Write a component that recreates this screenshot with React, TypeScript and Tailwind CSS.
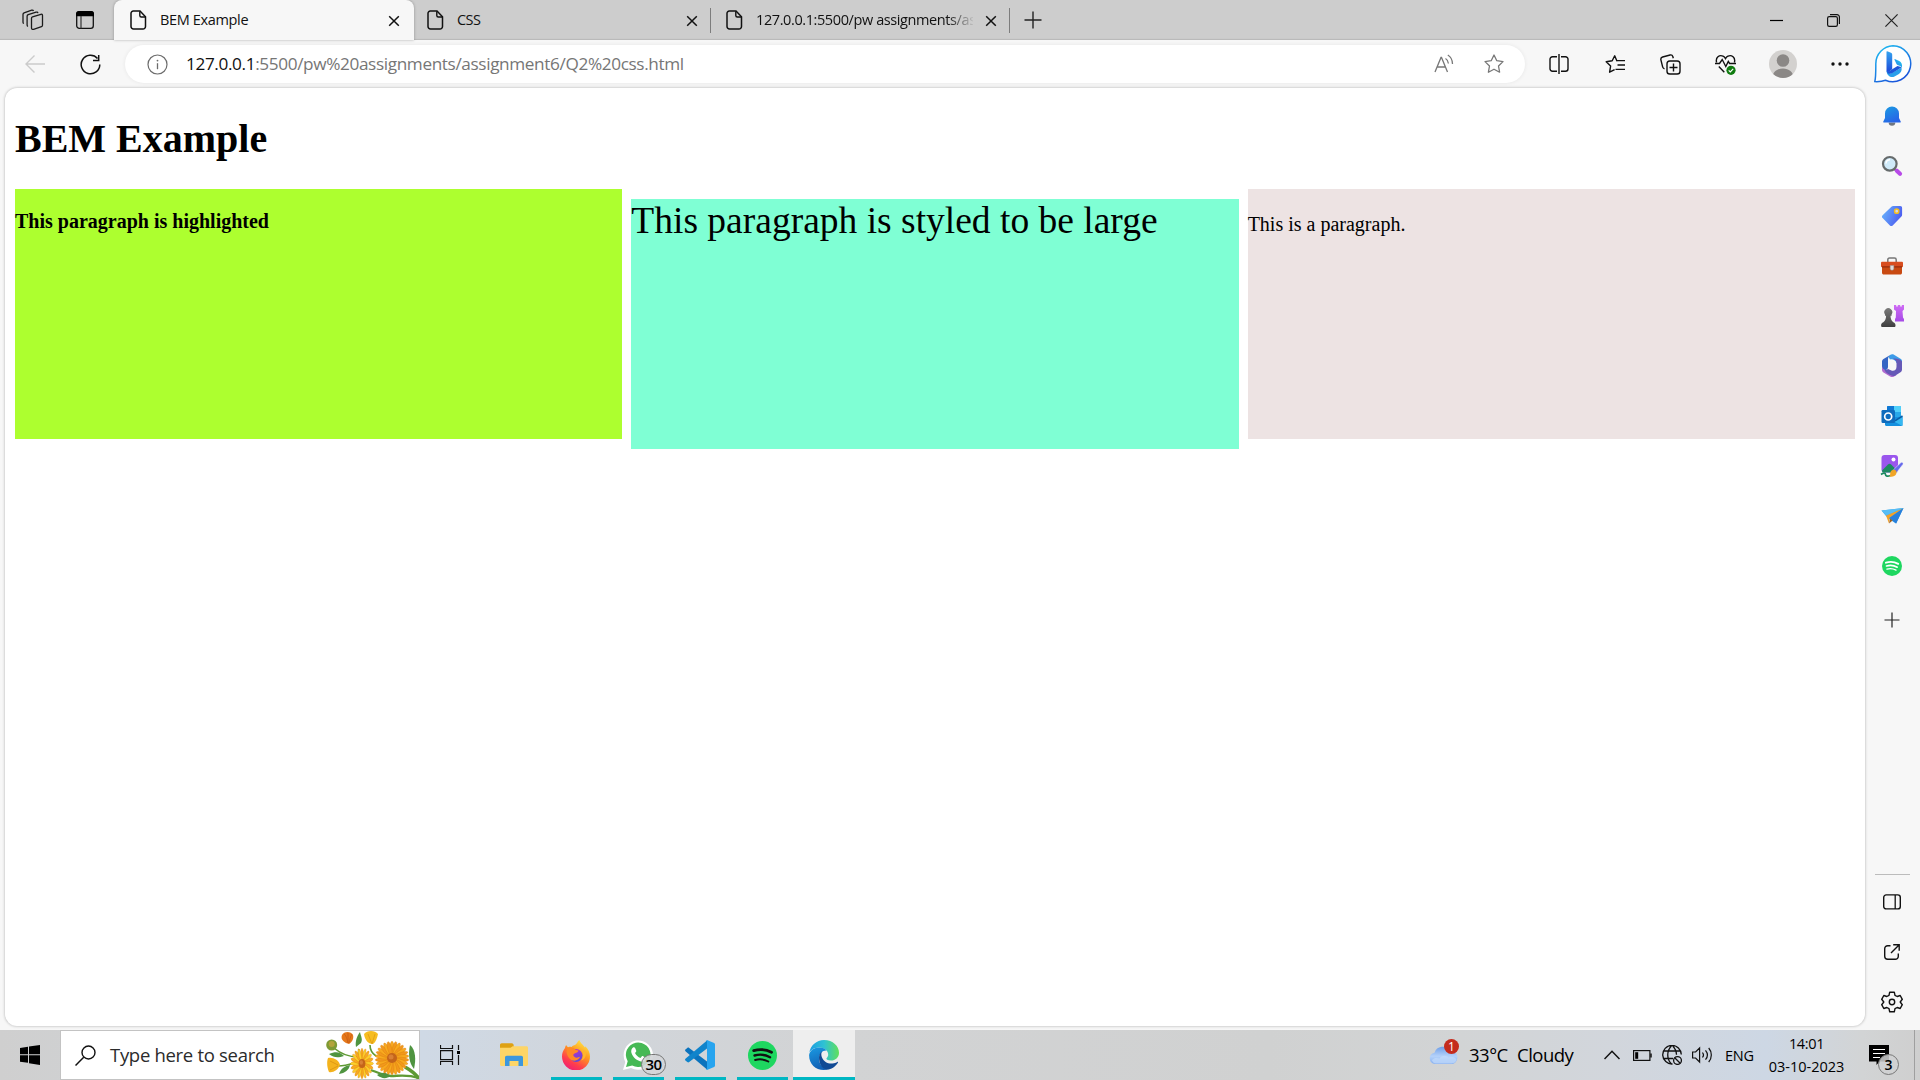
import type { ReactNode } from "react";

const UI = "font-['Open_Sans','Noto_Sans',sans-serif]";
const SERIF = "font-['Liberation_Serif',serif]";

type SvgProps = { w: number; h: number; children: ReactNode; className?: string };

function Svg({ w, h, children, className = "" }: SvgProps) {
  return (
    <svg width={w} height={h} viewBox={`0 0 ${w} ${h}`} fill="none" className={`block shrink-0 ${className}`}>
      {children}
    </svg>
  );
}

function Cell({ className, children }: { className: string; children?: ReactNode }) {
  return <div className={`flex shrink-0 items-center justify-center ${className}`}>{children}</div>;
}

/* ---------- tab strip ---------- */

function FileIcon() {
  return (
    <Svg w={17} h={20}>
      <path d="M3.3 1H10l5.5 5.7v9.8A2.5 2.5 0 0 1 13 19H3.5A2.5 2.5 0 0 1 1 16.500V3.300A2.300 2.300 0 0 1 3.300 1Z" stroke="#111" strokeWidth="1.500" />
      <path d="M9.800 1.300V5.500a1.500 1.500 0 0 0 1.500 1.500h4" stroke="#111" strokeWidth="1.400" />
    </Svg>
  );
}

function CloseX() {
  return (
    <Svg w={12} h={12}>
      <path d="M1.200 1.200 10.800 10.800M10.800 1.200 1.200 10.800" stroke="#111" strokeWidth="1.500" />
    </Svg>
  );
}

function Tab({ title, active, faded, tracking }: { title: string; active?: boolean; faded?: boolean; tracking: string }) {
  return (
    <div
      className={
        active
          ? "z-10 -mr-[2px] flex h-10 w-[300px] shrink-0 items-center rounded-t-lg bg-[#f7f7f7] pl-4 shadow-[0_0_3px_rgba(0,0,0,0.3)]"
          : "flex h-10 w-[299px] shrink-0 items-center pl-[15px]"
      }
    >
      <FileIcon />
      <div
        className={`ml-[13px] w-[218px] overflow-hidden text-[14.5px] leading-5 whitespace-nowrap text-[#111] ${tracking} ${
          faded ? "[mask-image:linear-gradient(to_right,#000_88%,transparent_101%)]" : ""
        }`}
      >
        {title}
      </div>
      <div className={active ? "ml-[10px] pt-px" : "ml-[12px] pt-px"}>
        <CloseX />
      </div>
      {!active && <div className="ml-[12px] h-[25px] w-px bg-[#7d7d7d]" />}
    </div>
  );
}

function TitleBar() {
  return (
    <div className="flex h-10 shrink-0 bg-[#cdcdcd] shadow-[inset_0_-2px_1px_-1px_#b9b9b9]">
      <div className="flex w-[114px] shrink-0 items-center pl-[22px]">
        <Svg w={22} h={22}>
          <g stroke="#1c1c1c" strokeWidth="1.300" strokeLinejoin="round">
            <path d="M9.500 9.300c0-.7.400-1.200 1-1.400l8.400-2.600c.9-.3 1.600.2 1.600 1.100v9.800c0 .7-.4 1.200-1 1.400l-7.900 2.700c-1.200.4-2.100-.2-2.100-1.300V9.300Z" />
            <path d="M6 17.500c-.6-.2-.9-.7-.9-1.400V7.300c0-.8.400-1.300 1.100-1.600l7.900-2.500c.9-.3 1.600 0 1.800.9" />
            <path d="M1.900 14.500c-.6-.2-.9-.7-.9-1.300V5.400c0-.8.400-1.300 1.100-1.600L9.700 1.200c.8-.2 1.500 0 1.800.8" />
          </g>
        </Svg>
        <Svg w={18} h={18} className="ml-8">
          <rect x="0.700" y="0.700" width="16.600" height="16.600" rx="2.600" stroke="#111" strokeWidth="1.300" />
          <path d="M0 5.300V3a3 3 0 0 1 3-3h12a3 3 0 0 1 3 3v2.300Z" fill="#000" />
          <path d="M5 5v12.500" stroke="#333" strokeWidth="1.200" />
        </Svg>
      </div>
      <Tab title="BEM Example" active tracking="tracking-[-0.35px]" />
      <Tab title="CSS" tracking="tracking-[-0.6px]" />
      <Tab title="127.0.0.1:5500/pw assignments/assignment6" faded tracking="tracking-[-0.4px]" />
      <Cell className="-ml-px w-12">
        <Svg w={18} h={18}>
          <path d="M9 .500v17M.500 9h17" stroke="#222" strokeWidth="1.400" />
        </Svg>
      </Cell>
      <div className="flex-1" />
      <Cell className="w-[57px]">
        <Svg w={13} h={13}>
          <path d="M0 6.500h13" stroke="#000" strokeWidth="1.200" />
        </Svg>
      </Cell>
      <Cell className="w-[57px]">
        <Svg w={13} h={13}>
          <rect x="0.600" y="2.600" width="9.800" height="9.800" rx="1.600" stroke="#111" strokeWidth="1.200" />
          <path d="M3 .600h7a2.400 2.400 0 0 1 2.400 2.400v7" stroke="#111" strokeWidth="1.200" />
        </Svg>
      </Cell>
      <Cell className="w-[58px]">
        <Svg w={13} h={13}>
          <path d="m.400.400 12.200 12.200M12.600.400.400 12.600" stroke="#222" strokeWidth="1.200" />
        </Svg>
      </Cell>
    </div>
  );
}

/* ---------- toolbar ---------- */

function BingLogo() {
  return (
    <Svg w={40} h={40}>
      <defs>
        <linearGradient id="bingRing" x1="0" y1="0" x2="0.600" y2="1">
          <stop offset="0" stopColor="#1fc3f2" />
          <stop offset="1" stopColor="#1a56db" />
        </linearGradient>
        <linearGradient id="bingStem" x1="0" y1="0" x2="0" y2="1">
          <stop offset="0" stopColor="#35a5f0" />
          <stop offset="1" stopColor="#1c46d8" />
        </linearGradient>
        <linearGradient id="bingBowl" x1="1" y1="0" x2="0" y2="1">
          <stop offset="0" stopColor="#22d6ee" />
          <stop offset="1" stopColor="#2b74ea" />
        </linearGradient>
      </defs>
      <path d="M20 1.700a18 18 0 1 1-7.500 34.500c-2.500 1-6.200 1.600-10.700 1.400 1.100-4.500 1-8 1-17.900A18 18 0 0 1 20 1.700Z" fill="#fff" stroke="url(#bingRing)" strokeWidth="1.500" />
      <path d="m14.200 7.200 3.800 1.500c.8.400 1.200 1 1.200 1.800v14.700l-4.700 3.600c-.8-.5-1-1.200-1-2.200V7.800c0-.5.300-.8.700-.6Z" fill="url(#bingStem)" />
      <path d="M13.700 26.300c.5 2.500 3 4 5.300 2.800l9.500-5.500c.7 3-.7 5.500-3 6.700l-4 2.200c-3.400 1.700-7.500-.8-7.800-4.800v-1.400Z" fill="#299fea" />
      <path d="m14 28.500 10.500-6.500 4.300 1.200-9.300 5.800c-2 1.200-4.200 1-5.500-.5Z" fill="#1d55d8" />
      <path d="m21.800 15 4.400 2c2.300 1 3.200 3.300 2.800 6.500-.6-.8-1.500-1.300-2.500-1.700l-2-.8c-.5-.2-.8-.4-1-.9l-2-4.300c-.2-.5 0-.8.300-.8Z" fill="url(#bingBowl)" />
    </Svg>
  );
}

function Toolbar() {
  return (
    <div className="flex h-12 shrink-0 items-center bg-[#f7f7f7]">
      <Cell className="w-[70px]">
        <Svg w={20} h={18}>
          <path d="M20 9H1M9.500.500 1 9l8.500 8.500" stroke="#cbcbcb" strokeWidth="1.400" />
        </Svg>
      </Cell>
      <Cell className="w-10">
        <Svg w={21} h={21}>
          <path d="M19.800 10.500A9.300 9.300 0 1 1 17.500 4.400M18.700 1v5.500h-5.700" stroke="#111" strokeWidth="1.500" />
        </Svg>
      </Cell>
      <div className="ml-[15px] flex h-[38px] w-[1400px] shrink-0 items-center rounded-full bg-white shadow-[0_0_4px_rgba(0,0,0,0.07)]">
        <Cell className="w-[65px]">
          <Svg w={21} h={21}>
            <circle cx="10.500" cy="10.500" r="9.500" stroke="#6c6c6c" strokeWidth="1.200" />
            <path d="M10.500 9.200v6" stroke="#6c6c6c" strokeWidth="1.300" />
            <circle cx="10.500" cy="6.600" r="0.900" fill="#6c6c6c" />
          </Svg>
        </Cell>
        <div className="-ml-[4px] text-[17.2px] leading-6 tracking-[-0.37px] whitespace-nowrap text-[#767676]">
          <span className="text-[#111]">127.0.0.1</span>:5500/pw%20assignments/assignment6/Q2%20css.html
        </div>
        <div className="flex-1" />
        <Cell className="w-[50px]">
          <Svg w={20} h={20}>
            <path d="m1 18 6-14.500h.500L13.500 18M3.200 13h8" stroke="#777" strokeWidth="1.300" />
            <path d="M11.500 4.500c1.700 1 2.700 2.800 2.900 5M13.800 1c2.900 1.700 4.600 5 4.700 9" stroke="#777" strokeWidth="1.300" />
          </Svg>
        </Cell>
        <Cell className="w-[50px]">
          <Svg w={20} h={20}>
            <path d="m10 1 2.800 5.700 6.200.9-4.500 4.400 1.100 6.200-5.600-3-5.600 3 1.100-6.200L1 7.600l6.200-.9Z" stroke="#777" strokeWidth="1.300" strokeLinejoin="round" />
          </Svg>
        </Cell>
        <div className="w-[6px]" />
      </div>
      <Cell className="ml-[6px] w-[56px]">
        <Svg w={20} h={20}>
          <path d="M8 2.700H3.500A2.500 2.500 0 0 0 1 5.200v9.600a2.500 2.500 0 0 0 2.500 2.500H8M12 2.700h4.500A2.500 2.500 0 0 1 19 5.200v9.600a2.500 2.500 0 0 1-2.500 2.500H12M10 0v20" stroke="#111" strokeWidth="1.400" />
        </Svg>
      </Cell>
      <Cell className="w-[55px]">
        <Svg w={20} h={20}>
          <path d="m12.300 6.600-.6-.1L9.700 1.800 7.200 6.700l-6 1 4.400 4.400-1 6.100 5-2.500" stroke="#111" strokeWidth="1.400" strokeLinejoin="round" />
          <path d="M11.300 6.600H20M12.500 11H20M10.500 15.400H20" stroke="#111" strokeWidth="1.400" />
        </Svg>
      </Cell>
      <Cell className="w-[56px]">
        <Svg w={21} h={21}>
          <rect x="7" y="7" width="13" height="13" rx="2.800" stroke="#111" strokeWidth="1.400" />
          <path d="M13.500 9.500v8M9.500 13.500h8" stroke="#111" strokeWidth="1.400" />
          <path d="M4.500 14.800c-1-.3-1.500-.8-1.800-1.700L.900 5.800c-.3-1.500.3-2.400 1.700-2.800l7.500-2c1.400-.3 2.300.2 2.700 1.500l.5 1.800" stroke="#111" strokeWidth="1.400" />
        </Svg>
      </Cell>
      <Cell className="w-[54px]">
        <Svg w={21} h={21}>
          <path d="M1.600 8.500C.200 3.500 4.500.500 8 2.200c1.200.6 1.900 1.400 2.500 2.400.6-1 1.300-1.800 2.500-2.400 3.500-1.700 7.800 1.300 6.400 6.300M3.800 12.500l5.500 5.800" stroke="#111" strokeWidth="1.400" />
          <path d="M0 9.500h4.500l2.700-4 3.600 7 2.500-5 1.300 2H21" stroke="#111" strokeWidth="1.400" />
          <circle cx="16" cy="16.300" r="4.600" fill="#107c10" />
          <path d="m13.700 16.400 1.600 1.500 2.900-3" stroke="#fff" strokeWidth="1.200" />
        </Svg>
      </Cell>
      <Cell className="w-[61px]">
        <Svg w={28} h={28}>
          <defs>
            <clipPath id="avatar">
              <circle cx="14" cy="14" r="14" />
            </clipPath>
          </defs>
          <circle cx="14" cy="14" r="14" fill="#d3d1cf" />
          <g clipPath="url(#avatar)" fill="#8b8886">
            <circle cx="14" cy="10.500" r="6.300" />
            <path d="M3.500 28c0-6 4.700-9.500 10.500-9.500S24.500 22 24.500 28Z" />
          </g>
        </Svg>
      </Cell>
      <Cell className="w-[53px]">
        <Svg w={18} h={6}>
          <circle cx="2" cy="3" r="1.700" fill="#111" />
          <circle cx="9" cy="3" r="1.700" fill="#111" />
          <circle cx="16" cy="3" r="1.700" fill="#111" />
        </Svg>
      </Cell>
      <Cell className="w-[53px]">
        <BingLogo />
      </Cell>
    </div>
  );
}

/* ---------- document ---------- */

function Document() {
  return (
    <div className={`ml-[5px] h-[938px] w-[1860px] shrink-0 rounded-xl bg-white px-[10px] text-black shadow-[0_0_3px_rgba(0,0,0,0.3)] ${SERIF}`}>
      <h1 className="pt-[28px] text-[40px] leading-[46px] font-bold">BEM Example</h1>
      <div className="mt-[27px] flex items-start gap-[9px]">
        <div className="h-[250px] flex-1 bg-[#adff2f] pt-[21px]">
          <p className="text-[20px] leading-[23px] font-bold">This paragraph is highlighted</p>
        </div>
        <div className="mt-[10px] h-[250px] flex-1 bg-[#7fffd4]">
          <p className="text-[37.500px] leading-[43px]">This paragraph is styled to be large</p>
        </div>
        <div className="h-[250px] flex-1 bg-[#ede3e3] pt-[24px]">
          <p className="text-[20px] leading-[23px]">This is a paragraph.</p>
        </div>
      </div>
    </div>
  );
}

/* ---------- sidebar ---------- */

function SpotifyMark({ size, lines }: { size: number; lines: string }) {
  return (
    <svg width={size} height={size} viewBox="0 0 28 28" fill="none" className="block">
      <circle cx="14" cy="14" r="14" fill="#1ed760" />
      <g stroke={lines} strokeLinecap="round">
        <path d="M5.500 9.300c5.500-1.600 12-1.200 17.200 1.600" strokeWidth="2.700" />
        <path d="M6.300 14c5-1.400 10.500-.8 15 1.700" strokeWidth="2.300" />
        <path d="M6.900 18.300c4.200-1.100 9-.6 12.700 1.500" strokeWidth="1.900" />
      </g>
    </svg>
  );
}

const sidebarIcons: ReactNode[] = [
  <Svg key="bell" w={20} h={20}>
    <defs>
      <linearGradient id="bell" x1="0" y1="0" x2="0.500" y2="1">
        <stop offset="0" stopColor="#1b9de2" />
        <stop offset="1" stopColor="#2764e7" />
      </linearGradient>
    </defs>
    <path d="M6.700 16.500h6.600a3.300 3.300 0 0 1-6.600 0Z" fill="#6f7680" />
    <path d="M10 .500a7 7 0 0 1 7 7V12l1.700 3.400c.3.700 0 1.200-.8 1.200H2.100c-.8 0-1.100-.5-.8-1.200L3 12V7.500a7 7 0 0 1 7-7Z" fill="url(#bell)" />
  </Svg>,
  <Svg key="search" w={22} h={22}>
    <path d="m13 14 2.500 2" stroke="#777" strokeWidth="2" />
    <path d="m15.800 15.800 3.200 3" stroke="#b84ae8" strokeWidth="4.200" strokeLinecap="round" />
    <circle cx="8.800" cy="8.800" r="6.800" fill="#cfeaf9" stroke="#666b6c" strokeWidth="2.200" />
    <path d="M5 8.500a4 4 0 0 1 4-3.700" stroke="#fff" strokeWidth="1.400" />
  </Svg>,
  <Svg key="tag" w={22} h={22}>
    <defs>
      <linearGradient id="tag" x1="0" y1="0.300" x2="1" y2="0.700">
        <stop offset="0" stopColor="#67b1fb" />
        <stop offset="1" stopColor="#4a55ef" />
      </linearGradient>
    </defs>
    <path d="M12.300 1h6.900c1.200 0 1.900.7 1.900 1.900v6.800c0 .7-.2 1.200-.7 1.700l-8.700 9c-.9.9-1.900.9-2.800 0l-7.300-7.300c-.9-.9-.9-2 0-2.900l8.800-8.500c.5-.5 1.100-.7 1.900-.7Z" fill="url(#tag)" />
    <circle cx="15.700" cy="6.200" r="2.100" fill="#d6d9e9" stroke="#f5bd1e" strokeWidth="1.500" />
  </Svg>,
  <Svg key="briefcase" w={22} h={20}>
    <path d="M6.800 6V3.700c0-1.100.6-1.700 1.700-1.700h5c1.100 0 1.700.6 1.700 1.700V6" stroke="#777" strokeWidth="1.500" />
    <rect x="0" y="5.700" width="22" height="5.500" rx="1" fill="#d84d1f" />
    <path d="M1 10.500h20v6.200c0 1-.7 1.800-1.800 1.800H2.800c-1.100 0-1.800-.8-1.800-1.800Z" fill="#c94a12" />
    <path d="M1 10.900h20" stroke="#942b0d" strokeWidth="1.200" />
    <path d="M9.200 9.500h3.600v3a1.800 1.800 0 0 1-3.600 0Z" fill="#ddd" stroke="#999" strokeWidth="0.500" />
  </Svg>,
  <Svg key="chess" w={23} h={24}>
    <defs>
      <linearGradient id="rook" x1="0" y1="0" x2="0" y2="1">
        <stop offset="0" stopColor="#cf6cf5" />
        <stop offset="1" stopColor="#a64be6" />
      </linearGradient>
      <linearGradient id="pawn" x1="0" y1="0" x2="0" y2="1">
        <stop offset="0" stopColor="#7a7a7a" />
        <stop offset="1" stopColor="#3f3f3f" />
      </linearGradient>
    </defs>
    <path d="M13 1h2.200v1.600h1.600V1h2.400v1.600h1.600V1H23v4.500l-1.500 1.500.5 6.500 1 1.500v2.500h-9V15l.8-1.500.2-6.500-2-1.500Z" fill="url(#rook)" />
    <path d="M4 10.500a4 4 0 1 1 6.600 0v1.300H9.500c.1 3 .8 5 2.800 6.500 1.500.6 2.200 1.500 2.200 3.200 0 1-.5 1.500-1.500 1.500H1.600c-1 0-1.500-.5-1.500-1.500 0-1.700.7-2.600 2.200-3.200 2-1.500 2.700-3.500 2.800-6.500H4Z" fill="url(#pawn)" />
  </Svg>,
  <Svg key="m365" w={22} h={24}>
    <path d="M13 .800 19.500 4.700c1 .6 1.500 1.500 1.500 2.700v2.800L15.500 9C14.500 6 11.500 4.800 9 5.600L7.500 2.800 9 1c1.300-.8 2.700-.9 4-.2Z" fill="#3d9be8" />
    <path d="M9.200.900C7.700 2 7 3.500 7 5.500V13c0 2-1.500 3-3 3.200-1.700.1-3-1-3-3V7.600c0-1.200.5-2.100 1.500-2.700Z" fill="#3565c4" />
    <path d="M1 12v3.700c0 1.200.5 2.100 1.500 2.700l6.600 4c1.300.8 2.700.8 4 0l2.500-1.500-8.500-5.500C5 17 1.500 15.500 1 12Z" fill="#b06bd0" />
    <path d="M21 7.500v8.100c0 1.200-.5 2.100-1.500 2.700l-5.500 3.400c-2 .5-4.500 0-7.500-2.200-1.500-1-2.300-2-3-3.500 1.500.3 2.700-.1 3.500-1l4 1.700c2.500.5 4.500-1 4.500-4V9c0-2.500-1.500-3.500-3.500-4.300 4-.5 7.500.8 9 2.800Z" fill="#6659b7" />
    <path d="m11.200 7.800 3.600 2.100v4.200l-3.600 2.100-3.600-2.100V9.900Z" fill="#f7f7f7" />
  </Svg>,
  <Svg key="outlook" w={22} h={22}>
    <rect x="6" y="1" width="14" height="12" rx="1.200" fill="#28a8ea" />
    <path d="M6 2.200C6 1.500 6.500 1 7.200 1H13v6H6Z" fill="#0f78d4" />
    <path d="M13 1h5.800c.7 0 1.200.5 1.200 1.200V7h-7Z" fill="#50d0fa" />
    <path d="M4 12h17.500v7.800c0 .7-.5 1.200-1.200 1.200H5.200c-.7 0-1.200-.5-1.200-1.200Z" fill="#1490df" />
    <path d="m21.500 11.500-8.500 5 8.500 4.500Z" fill="#35b8f1" />
    <path d="M21.500 11 14 15.800" stroke="#0a5da8" strokeWidth="1.500" />
    <rect x="0.500" y="5" width="13.500" height="13" rx="1.200" fill="#0f6cbd" />
    <circle cx="7.200" cy="11.500" r="3.500" stroke="#fff" strokeWidth="1.700" />
  </Svg>,
  <Svg key="designer" w={24} h={24}>
    <rect x="1.500" y="1" width="16.500" height="17.500" rx="3" fill="#9a56ed" />
    <path d="m2 16.500 6-6c1-1 2.100-1 3.100 0l6 6v2H3.500C2.500 18.500 2 17.800 2 16.500Z" fill="#1c8a60" />
    <circle cx="13.500" cy="5.500" r="2" fill="#fff" />
    <path d="M0 19.500h11V24H0Z" fill="#f7f7f7" />
    <path d="M1 20.500c3-2 4.500-1.500 4.500 0s2 2.300 5 1" stroke="#1c8a60" strokeWidth="1.800" />
    <path d="M21 8.500c1.300-.9 2.700.5 1.900 1.900l-6.500 8.400-3-3Z" fill="#6669ec" stroke="#f7f7f7" strokeWidth="0.500" />
    <path d="M13.600 15.800c2.500 0 3.500 2 2.600 4.200-1.200 2.600-4 3-7 2.500 1.300-1.300.7-2.300 1.200-4 .5-1.700 1.700-2.600 3.200-2.700Z" fill="#f0a527" />
  </Svg>,
  <Svg key="drop" w={23} h={20}>
    <path d="M.500 4.500 22.500 2 15 17.500 9.500 14 5 10Z" fill="#38a5ec" />
    <path d="m5 9.500 17.500-7.500-14 10L8 17.500Z" fill="#f1a22a" />
    <path d="m8.300 12 14.200-10-7.300 15.500Z" fill="#287fdb" />
    <path d="M8 17.500 9 12.600l2.600 1.800Z" fill="#a3611b" />
    <path d="M.500 4.500 22.500 2 5 9.500Z" fill="#57bdf5" />
  </Svg>,
  <SpotifyMark key="spotify" size={20} lines="#fff" />,
];

function Sidebar() {
  return (
    <div className="flex w-[54px] shrink-0 flex-col items-center">
      <div className="h-[3px] shrink-0" />
      {sidebarIcons.map((icon, i) => (
        <Cell key={i} className="h-[50px] w-[54px]">
          {icon}
        </Cell>
      ))}
      <Cell className="h-[58px] w-[54px]">
        <Svg w={16} h={16}>
          <path d="M8 .500v15M.500 8h15" stroke="#222" strokeWidth="1.200" />
        </Svg>
      </Cell>
      <div className="flex-1" />
      <div className="h-px w-[35px] bg-[#bcbcbc]" />
      <div className="h-[2px]" />
      <Cell className="h-[50px] w-[54px]">
        <Svg w={18} h={16}>
          <rect x="0.700" y="0.900" width="16.600" height="14" rx="2.500" stroke="#111" strokeWidth="1.400" />
          <path d="M12.200 1v14" stroke="#111" strokeWidth="1.300" />
        </Svg>
      </Cell>
      <Cell className="h-[50px] w-[54px]">
        <Svg w={16} h={16}>
          <path d="M6.500 1.700H3.700a3 3 0 0 0-3 3v7.600a3 3 0 0 0 3 3h7.600a3 3 0 0 0 3-3V9.500M9.200.800h6v6M15 1 7 9" stroke="#111" strokeWidth="1.400" />
        </Svg>
      </Cell>
      <Cell className="h-[50px] w-[54px]">
        <Svg w={22} h={22}>
          <path
            d="M8.700 1.200 13.300 1.200 14 4.300 16.200 5.500 19.200 4.500 21.300 8.300 19.200 11 21.300 13.700 19.200 17.500 16.200 16.500 14 17.700 13.300 20.800H8.700L8 17.700 5.800 16.500 2.800 17.500.700 13.700 2.800 11 .700 8.300 2.800 4.500 5.800 5.500 8 4.300Z"
            stroke="#111"
            strokeWidth="1.400"
            strokeLinejoin="round"
          />
          <circle cx="11" cy="11" r="2.700" stroke="#111" strokeWidth="1.400" />
        </Svg>
      </Cell>
      <div className="h-[3px] shrink-0" />
    </div>
  );
}

/* ---------- taskbar ---------- */

function Daisy({ x, y, r, petals, color, center, squash = 1 }: { x: number; y: number; r: number; petals: number; color: string; center: number; squash?: number }) {
  return (
    <g transform={`translate(${x} ${y}) scale(${squash} 1)`}>
      {Array.from({ length: petals }, (_, i) => (
        <ellipse key={i} cx="0" cy={-r * 0.6} rx={r * 0.12} ry={r * 0.42} fill={i % 2 ? color : "#f8a91f"} stroke="#d9800c" strokeWidth="0.400" transform={`rotate(${(360 / petals) * i})`} />
      ))}
      <circle r={center} fill="#c4641a" />
      <circle r={center * 0.5} cx={-center * 0.2} cy={-center * 0.2} fill="#d98034" />
    </g>
  );
}

function Flowers() {
  return (
    <Svg w={94} h={48}>
      <g stroke="#5f9a34" strokeWidth="1.600">
        <path d="M9 17c7 6 14 9 24 9M34 18c-1 3-1 6 0 10M45 14c0 5 3 9 6 11M13 35c6 0 10-1 16-3" />
        <path d="M94 47c-12-4-20-2-28-2-8-1-12-3-20-6" strokeWidth="2.400" />
        <path d="M94 48c-3-5-7-8-14-12" strokeWidth="3.600" />
      </g>
      <g fill="#4f9440">
        <path d="M31 16c-1-6 1-11 4-15 1 5 3 7 1 11Z" />
        <path d="M4 23c7-3 11-2 15 2-6 2-10 2-15-2Z" />
        <path d="M14 43c2-6 6-8 11-9-1 5-5 8-11 9Z" />
        <path d="M85 14c6 5 6 15 4 24-5-6-6-15-4-24Z" />
        <path d="M52 44c6-4 10-2 14 1-5 3-9 3-14-1Z" />
      </g>
      <circle cx="6.700" cy="14" r="5.500" fill="#7e9a34" />
      <circle cx="6.700" cy="13" r="3" fill="#b3a33c" />
      <path d="M17 4c2-4 9-4 11 0 1 4-1 7-4 9-4-1-9-4-7-9Z" fill="#e5791c" />
      <path d="M19 3c2 1 3 5 4 9M23 2v10M27 3c-2 3-2 6-3 9" stroke="#c65a12" strokeWidth="0.700" />
      <path d="M39 3c3-4 11-4 14 0-1 4-2 8-5 10-4 0-8-3-9-10Z" fill="#f6bd20" />
      <path d="M43 3c1 3 3 7 4 10M50 3l-3 10" stroke="#dd9711" strokeWidth="0.700" />
      <path d="M3 27c5-1 11 2 12 7-2 5-7 8-11 7-1-2-3-9-1-14Z" fill="#f4b31d" />
      <path d="m5 30 8 4M5 39l8-4" stroke="#d58d10" strokeWidth="0.700" />
      <Daisy x={37} y={32.5} r={15} petals={20} color="#fccf2b" center={4.500} squash={0.750} />
      <Daisy x={67} y={27} r={16.5} petals={26} color="#f2981c" center={5} />
    </Svg>
  );
}

function TaskbarApp({ children, active }: { children: ReactNode; active?: boolean }) {
  return (
    <div className={`flex h-[50px] w-[62px] shrink-0 flex-col items-center ${active ? "bg-[#eeeeee]" : ""}`}>
      <div className="flex h-[47px] items-center pt-[3px]">{children}</div>
      <div className={active ? "h-[3px] w-full bg-[#00b7c3]" : "h-[3px] w-[51px] bg-[#00b7c3]"} />
    </div>
  );
}

function Firefox() {
  return (
    <Svg w={30} h={30}>
      <defs>
        <linearGradient id="fox" x1="0.800" y1="0" x2="0.250" y2="1">
          <stop offset="0" stopColor="#fff04a" />
          <stop offset="0.400" stopColor="#ff9a1f" />
          <stop offset="0.750" stopColor="#ff3d4d" />
          <stop offset="1" stopColor="#ee1d78" />
        </linearGradient>
        <linearGradient id="foxGlobe" x1="0.300" y1="0" x2="0.700" y2="1">
          <stop offset="0" stopColor="#b833c9" />
          <stop offset="1" stopColor="#5a48dd" />
        </linearGradient>
      </defs>
      <path d="M4 8c.1-1 .5-2.200 1.100-3 .5 1 1.200 1.700 2 2.200 1-.5 2.200-.6 3.400-.3C12 5 14.500 5.500 16 3c.6-1 1-2 2.500-3 .5 3 3.500 4.300 5.500 7.500.2-.4.300-.8.300-1.300 3 3 4.700 6.500 4.700 10.300A14 14 0 0 1 1 16.500C1 13 2 10.500 4 8Z" fill="url(#fox)" />
      <circle cx="15" cy="15.500" r="6.500" fill="url(#foxGlobe)" />
      <path d="M6 9c2-2 5-2 7.500-.5C14 10 16 10 17.500 10.500c-.3 1.500-1.500 2-3.500 2.700-2 .8-2.200 2-1 3.300 2 1.800 4 1.200 6 .3-1 4-7 5.500-10.500 1.700C6 15.500 5 12.500 6 9Z" fill="#ff8a25" />
      <path d="M20 9c3 4 2.500 9 0 11.500 3.500-1 5-4 5-7C24 11 22 10 20 9Z" fill="#ffb52d" />
    </Svg>
  );
}

function Edge() {
  return (
    <Svg w={30} h={30}>
      <defs>
        <linearGradient id="edgeTop" x1="0" y1="0.500" x2="1" y2="0.500">
          <stop offset="0" stopColor="#1b9de2" />
          <stop offset="0.500" stopColor="#2fc2d3" />
          <stop offset="1" stopColor="#62e05a" />
        </linearGradient>
        <linearGradient id="edgeLeft" x1="0" y1="0" x2="0.300" y2="1">
          <stop offset="0" stopColor="#1a9ae2" />
          <stop offset="1" stopColor="#1261b5" />
        </linearGradient>
      </defs>
      <path d="M.300 13C1.300 5.500 7.500 0 15 0c9 0 15 6.200 15 12.700 0 4.800-3.700 7.800-8 7.800-3.500 0-5-1.500-4.500-2.300 1-1 1.700-2 1.700-3.700C19.200 10.500 15 7.500 10.500 7.500 5 7.500 1 10.500.300 13Z" fill="url(#edgeTop)" />
      <path d="M.100 15C.600 10.500 5 7.500 10.500 7.500c3 0 5.500 1.200 7.200 3-3.700-.5-7.700 3-7.700 8 0 5.500 4 10.300 9.500 10.800C9 32 0 25.500.100 15Z" fill="url(#edgeLeft)" />
      <path d="M10 17.500c0-2.500 1-4.700 3-6.200-1 2-.8 4.200 0 6.200 1.600 4.200 6 6.500 10.500 6 2-.3 3.600-1 4.800-1.600.7-.3 1 .2.600.8C26 27 21.500 30 17.500 29.500 12.500 28.500 10 23 10 17.500Z" fill="#114a94" />
    </Svg>
  );
}

function Taskbar() {
  return (
    <div className="flex h-[50px] shrink-0 bg-[linear-gradient(90deg,#cfcfcf_0%,#d0d3d6_10%,#cfd9e5_22%,#d1d5da_32%,#d2d3d4_44%,#d0d1d1_66%,#d2d4d5_76%,#d2d6dc_84%,#cdd7e4_92%,#d2d4d5_97%,#cfcfcf_100%)] text-black">
      <Cell className="w-[60px]">
        <Svg w={20} h={20}>
          <path d="M0 3 8 1.800v7.500H0ZM9 1.600 20 0v9.300H9ZM0 10.300h8v7.500L0 16.800ZM9 10.300h11V20L9 18.200Z" fill="#000" />
        </Svg>
      </Cell>
      <div className="flex w-[360px] shrink-0 items-center border border-[#c3c3c3] bg-white pl-[14px]">
        <Svg w={21} h={21}>
          <circle cx="13.500" cy="7.500" r="6.500" stroke="#111" strokeWidth="1.400" />
          <path d="M8.700 12.300.500 20.500" stroke="#111" strokeWidth="1.500" />
        </Svg>
        <div className="ml-[14px] w-[216px] text-[18.500px] leading-6 tracking-[-0.3px] whitespace-nowrap text-[#2b2b2b]">Type here to search</div>
        <Flowers />
      </div>
      <Cell className="w-[60px]">
        <Svg w={20} h={20}>
          <path d="M.500 0v3.500h12V0M.500 20v-3.500h12V20M.500 5.700h12v9H.500ZM18.500 0v5M18.500 10v10" stroke="#111" strokeWidth="1.200" />
          <rect x="17" y="6" width="3" height="3" fill="#000" />
        </Svg>
      </Cell>
      <Cell className="w-[65px] pl-[2px]">
        <Svg w={28} h={24}>
          <path d="M0 2C0 1 .700.300 1.700.300h10c.8 0 1.300.3 1.600 1L14 3.500 11 6H0Z" fill="#dea113" />
          <path d="M0 4.800h10.500l2.200-1.600h13.800c.9 0 1.500.6 1.500 1.500v16.800c0 .9-.6 1.500-1.500 1.500h-25C.600 23 0 22.400 0 21.500Z" fill="#fdd567" />
          <path d="M5 23V14.500c0-1.100.7-1.800 1.800-1.800h14.400c1.100 0 1.800.7 1.800 1.800V23h-4.500v-5h-9v5Z" fill="#3c97dd" />
        </Svg>
      </Cell>
      <TaskbarApp>
        <Firefox />
      </TaskbarApp>
      <TaskbarApp>
        <div className="relative">
          <Svg w={30} h={30}>
            <path d="M0 30 2.300 22A14.700 14.700 0 1 1 8 27.900Z" fill="#fff" />
            <path d="M3 27 4.700 21.200A12.300 12.300 0 1 1 9.200 25.500Z" fill="#46b955" />
            <path d="M10 7.500c.6-.5 1.600-.5 2 .3l1.200 2.700c.2.500.1 1-.3 1.400l-.9 1c1.300 2.400 3 4 5.500 5l1.200-1.400c.4-.4.8-.5 1.300-.3l2.500 1.300c.6.300.7.7.6 1.200-.3 2.100-2.200 3.300-4.200 3-5-.9-9-4.300-10.500-9-.5-2 .1-4.100 1.600-5.200Z" fill="#fff" />
          </Svg>
          <div className="absolute top-[14px] left-[18px] flex h-[21px] w-[25px] items-center justify-center rounded-full border border-[#777] bg-[#d3d5d7]/90 text-[15px] leading-none font-semibold tracking-[-0.500px]">
            30
          </div>
        </div>
      </TaskbarApp>
      <TaskbarApp>
        <Svg w={30} h={30}>
          <path d="M.700 11.500c-.9-.8-.9-1.500 0-2.300L2.300 7.900c.6-.5 1.300-.5 1.900 0L22 21.500v8L.700 11.500Z" fill="#0b73bd" />
          <path d="M.700 18.500c-.9.800-.9 1.500 0 2.300l1.600 1.300c.6.500 1.300.5 1.900 0L22 8.500v-8L.700 18.500Z" fill="#1084cb" />
          <path d="M20.500.500c.5-.5 1.300-.6 2-.3l6 2.500c1 .4 1.500 1.100 1.500 2v20.600c0 .9-.5 1.600-1.500 2l-6 2.500c-.7.300-1.500.2-2-.3.800.5 1.500 0 1.500-1.200V1.700c0-1.200-.7-1.700-1.500-1.200Z" fill="#27a4ef" />
        </Svg>
      </TaskbarApp>
      <TaskbarApp>
        <SpotifyMark size={29} lines="#111" />
      </TaskbarApp>
      <TaskbarApp active>
        <Edge />
      </TaskbarApp>
      <div className="flex-1" />
      <div className="relative mt-[13px] h-[24px] w-[40px] shrink-0">
        <Svg w={31} h={24}>
          <defs>
            <linearGradient id="cloud" x1="0" y1="0" x2="0" y2="1">
              <stop offset="0" stopColor="#6f9fe8" />
              <stop offset="0.550" stopColor="#b5d2fa" />
              <stop offset="1" stopColor="#87b0f0" />
            </linearGradient>
          </defs>
          <path d="M6 21a5.700 5.700 0 0 1-.5-11.300A8.800 8.800 0 0 1 21 7.500a7 7 0 0 1 3 13.500Z" fill="url(#cloud)" />
          <path d="M3 17c2-2.500 5-2.500 7.500-1.500 2-3.500 6.500-3.500 9-1 3-1.500 6-.5 8 2-.7 3-3 4-5 4H6.500c-1.500 0-3-1.500-3.500-3.500Z" fill="#c3dbfb" opacity="0.700" />
        </Svg>
        <div className="absolute -top-[4px] left-[15px] flex size-[15px] items-center justify-center rounded-full bg-[#c42b1c] text-[12px] leading-none text-white">1</div>
      </div>
      <div className="flex w-[135px] shrink-0 items-center text-[18.500px] tracking-[-0.500px] whitespace-nowrap">
        <span className="w-[48px]">33°C</span>
        <span>Cloudy</span>
      </div>
      <Cell className="w-[16px]">
        <Svg w={16} h={10}>
          <path d="m.500 9 7.500-7.700L15.500 9" stroke="#111" strokeWidth="1.500" />
        </Svg>
      </Cell>
      <Cell className="ml-[13px] w-[19px]">
        <Svg w={19} h={11}>
          <rect x="0.600" y="0.600" width="16.300" height="9.800" stroke="#111" strokeWidth="1.200" />
          <rect x="2.200" y="2.200" width="3" height="6.600" fill="#000" />
          <path d="M18 3.500v4" stroke="#111" strokeWidth="1.500" />
        </Svg>
      </Cell>
      <Cell className="ml-[10px] w-[20px]">
        <Svg w={20} h={20}>
          <path d="M10.500 19a9.300 9.300 0 1 1 8.800-9.500M9.500 .700C4.500 6 4.500 14 9.500 19M10.500 .700c2.500 2.500 4 5.500 4 9M1.700 6h16.600M1.700 13.500H11" stroke="#111" strokeWidth="1.300" />
          <circle cx="15.500" cy="15.500" r="3.900" stroke="#111" strokeWidth="1.300" />
          <path d="m12.700 12.800 5.500 5.400" stroke="#111" strokeWidth="1.200" />
        </Svg>
      </Cell>
      <Cell className="ml-[10px] w-[21px]">
        <Svg w={21} h={18}>
          <path d="M.600 6v6h3l4 4V2l-4 4ZM10.500 6.500c1.200 1.500 1.200 3.500 0 5M13.500 4.300c2.300 2.800 2.300 6.600 0 9.400M16.700 2c3.500 4 3.500 10 0 14" stroke="#111" strokeWidth="1.200" />
        </Svg>
      </Cell>
      <div className="ml-[12px] flex w-[42px] shrink-0 items-center pt-px text-[14.500px] tracking-[-0.200px]">ENG</div>
      <div className="flex w-[79px] shrink-0 flex-col items-center pt-[2px] text-[14.500px] leading-[23px] whitespace-nowrap">
        <span className="tracking-[-0.350px]">14:01</span>
        <span className="tracking-[-0.020px]">03-10-2023</span>
      </div>
      <div className="relative ml-[23px] w-[45px] shrink-0 pt-[15px]">
        <Svg w={20} h={20}>
          <path d="M0 0h20v16.500h-9.500L7.500 20v-3.500H0Z" fill="#000" />
          <path d="M4 4.500h12M4 8.500h12M4 12.500h7" stroke="#fff" strokeWidth="1.200" />
        </Svg>
        <div className="absolute top-[24px] left-[9px] flex size-[21px] items-center justify-center rounded-full border border-[#777] bg-[#d0d1d2]/85 text-[14px] leading-none font-semibold">3</div>
      </div>
      <div className="w-px shrink-0 bg-[#9f9f9f]" />
      <div className="w-[5px] shrink-0" />
    </div>
  );
}

export default function App() {
  return (
    <div className={`flex h-[1080px] w-[1920px] flex-col overflow-hidden bg-[#f7f7f7] ${UI}`}>
      <TitleBar />
      <Toolbar />
      <div className="flex h-[942px] shrink-0">
        <Document />
        <Sidebar />
      </div>
      <Taskbar />
    </div>
  );
}
